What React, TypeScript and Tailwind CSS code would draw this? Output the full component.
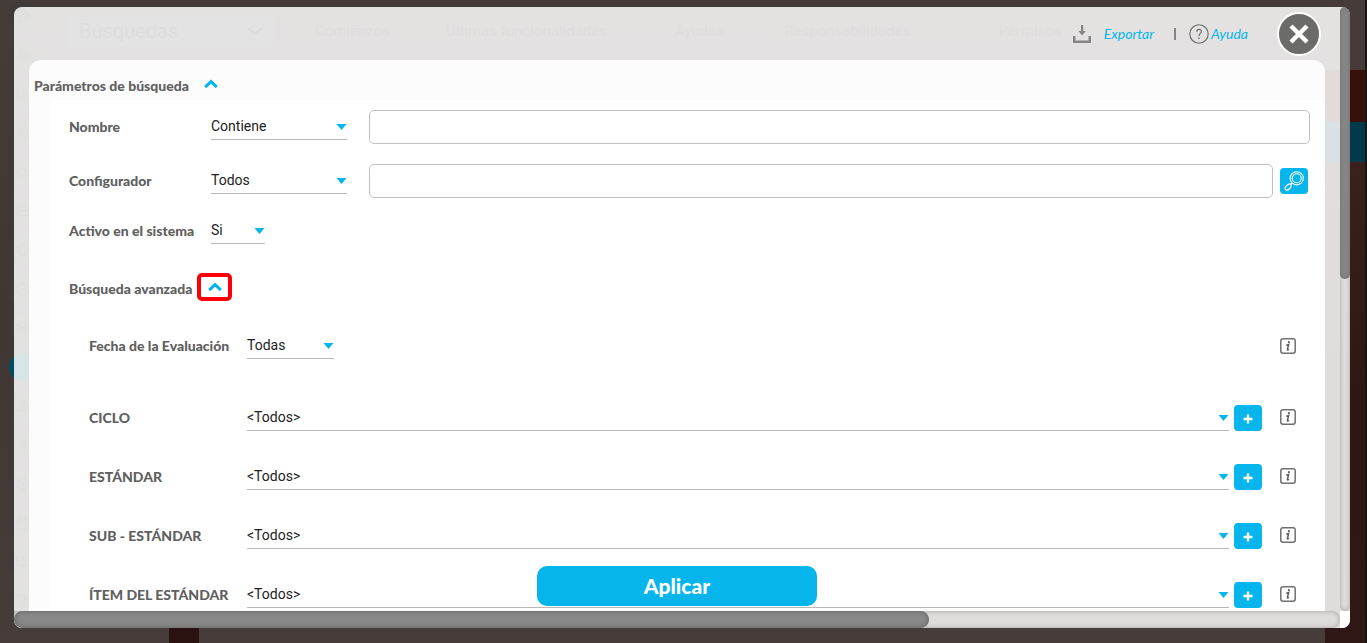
import * as React from 'react';
import {
  BarChart3,
  BookOpen,
  Box,
  Calendar,
  CircleCheck,
  ClipboardList,
  Cloud,
  FileText,
  Home,
  Layers,
  Mail,
  Settings,
  Shield,
  TriangleAlert,
  User,
  Users,
} from 'lucide-react';

const menuIcons = [Home, Settings, BarChart3, Users, Cloud, Mail, Shield, CircleCheck, Layers, ClipboardList, TriangleAlert, User, Box, Calendar, BookOpen, FileText];

const criteria = ['CICLO', 'ESTÁNDAR', 'SUB - ESTÁNDAR', 'ÍTEM DEL ESTÁNDAR'];

const labelClass = "shrink-0 pb-px font-['Lato',sans-serif] text-sm leading-5 font-black text-[#606060]";
const inputClass = 'h-[34px] min-w-0 flex-1 rounded-[5px] border border-[#c0c0c4] bg-white px-2 text-sm outline-none';

interface SelectProps {
  id: string;
  options: string[];
  className: string;
}

const Select = ({ id, options, className }: SelectProps) => (
  <div className={`relative ${className}`}>
    <select
      id={id}
      className="block h-[26px] w-full appearance-none border-b border-[#b8b8b8] bg-transparent pr-5 pb-[2px] text-sm leading-5 text-[#222222] outline-none"
    >
      {options.map((option) => (
        <option key={option}>{option}</option>
      ))}
    </select>
    <svg className="pointer-events-none absolute top-[10px] right-0 h-[6px] w-[11px]" viewBox="0 0 11 6">
      <path d="M0.5 0h10L5.5 6z" fill="#06b5ec" />
    </svg>
  </div>
);

const Chevron = () => (
  <svg className="h-[10px] w-[14px]" viewBox="0 0 14 10" fill="none">
    <path d="M1.2 8.2L7 2.6l5.8 5.6" stroke="#06b5ec" strokeWidth="3" />
  </svg>
);

const InfoButton = () => (
  <button type="button" aria-label="Información" className="h-4 w-4 shrink-0">
    <svg className="h-4 w-4" viewBox="0 0 16 16" fill="none">
      <rect x="0.8" y="0.8" width="14.4" height="14.4" rx="2.2" stroke="#707070" strokeWidth="1.5" />
      <circle cx="8.9" cy="4.2" r="1.1" fill="#606060" />
      <path d="M6.3 7.3l2.3-.7-1.2 4.9c-.1.7.5.6 1.5-.3" stroke="#606060" strokeWidth="1.5" />
    </svg>
  </button>
);

const Backdrop = () => (
  <div aria-hidden="true" className="absolute inset-0 -z-10 flex bg-linear-to-b from-[#453b39] via-[#403634] to-[#463d3b]">
    <div className="flex shrink-0 flex-col gap-[11px] pt-[2px] pl-[9px]">
      {menuIcons.map((Icon, index) => (
        <span
          key={index}
          className={`flex h-7 w-7 shrink-0 items-center justify-center rounded-full ${index === 9 ? 'bg-[#004c62] text-[#004c62]' : 'bg-[#3d3c3a] text-[#2a2624]'}`}
        >
          <Icon size={14} />
        </span>
      ))}
    </div>
    <div className="flex min-w-0 flex-1 flex-col justify-between">
      <div className="flex h-[62px] items-center pl-[30px] font-['Roboto',sans-serif] text-[15px] text-[#221c1a]">
        <div className="mr-10 flex h-8 w-[208px] items-center justify-between rounded bg-[#4a4341] px-3 text-xl text-[#221c1a]">
          Búsquedas
          <svg className="h-2 w-4" viewBox="0 0 16 8" fill="none">
            <path d="M1 1l7 6 7-6" stroke="#100c0b" strokeWidth="2" />
          </svg>
        </div>
        <span className="mr-14">Comienzos</span>
        <span className="mr-[68px]">Últimas funcionalidades</span>
        <span className="mr-[60px]">Ayudas</span>
        <span className="mr-[88px]">Responsabilidades</span>
        <span>Permisos</span>
      </div>
      <div className="ml-[132px] h-5 w-[30px] bg-[#2a1211]" />
    </div>
    <div className="flex w-[42px] shrink-0 flex-col border-r-2 border-[#171515]">
      <div className="h-[70px] bg-[#463b39]" />
      <div className="h-[52px] bg-[#371009]" />
      <div className="h-10 bg-[#003a4c]" />
      <div className="flex-1 bg-linear-to-b from-[#3a211b] via-[#2d1613] to-[#2e1714]" />
    </div>
  </div>
);

const App = () => {
  return (
    <div className="relative isolate h-screen overflow-hidden pt-[7px] pr-[17px] pb-[15px] pl-[14px] font-['Roboto',sans-serif]">
      <Backdrop />
      <div role="dialog" aria-label="Parámetros de búsqueda" className="flex h-full overflow-hidden rounded-lg bg-white/85">
        <div className="relative flex min-w-0 flex-1 flex-col">
          <header className="flex h-[54px] shrink-0 items-center justify-end pr-[19px] font-['Lato',sans-serif] text-sm text-[#06b5ec] italic">
            <a href="#exportar" className="flex items-center gap-[13px]">
              <svg className="h-[18px] w-[18px]" viewBox="0 0 18 18">
                <path d="M0 11h2.5v4.5h13V11H18v7H0z" fill="#858585" />
                <path d="M8 0h2.2v6h2.6L9.1 10.6 5.4 6H8z" fill="#858585" />
              </svg>
              Exportar
            </a>
            <span className="mr-[13px] ml-5 h-3 w-[2px] bg-[#858585]" />
            <a href="#ayuda" className="mr-[29px] flex items-center gap-[2px]">
              <svg className="h-5 w-5" viewBox="0 0 20 20" fill="none" stroke="#6b6b6b">
                <circle cx="10" cy="10" r="9.2" strokeWidth="1.1" />
                <path d="M7.7 7.8c0-3.3 4.7-3.1 4.7-.3 0 1.9-2.4 2-2.4 4.4" strokeWidth="1.2" />
                <path d="M10 13.4v1.5" strokeWidth="1.4" />
              </svg>
              Ayuda
            </a>
            <button type="button" aria-label="Cerrar" className="flex h-11 w-11 items-center justify-center rounded-full border-2 border-white bg-[#6b6b69]">
              <svg className="h-5 w-5" viewBox="0 0 20 20" fill="none">
                <path d="M2 2l16 16M18 2L2 18" stroke="#ffffff" strokeWidth="4.4" />
              </svg>
            </button>
          </header>

          <main className="-mt-px mr-[15px] ml-[15px] min-h-0 flex-1 overflow-hidden rounded-t-xl bg-white/90">
            <h2 className="flex h-10 items-center gap-[15px] pt-3 pl-[5px]">
              <span className={labelClass}>Parámetros de búsqueda</span>
              <button type="button" aria-label="Contraer parámetros" className="pb-1">
                <Chevron />
              </button>
            </h2>
            <form className="ml-5 rounded-tl-lg bg-white/90 pt-[10px] pr-[15px] pl-5">
              <div className="flex flex-col gap-5">
                <div className="flex items-center">
                  <label htmlFor="nombre-modo" className={`${labelClass} w-[142px]`}>Nombre</label>
                  <Select id="nombre-modo" options={['Contiene', 'Igual a']} className="mr-[22px] w-[136px]" />
                  <input type="text" aria-label="Nombre" className={inputClass} />
                </div>
                <div className="flex items-center">
                  <label htmlFor="configurador-modo" className={`${labelClass} w-[142px]`}>Configurador</label>
                  <Select id="configurador-modo" options={['Todos']} className="mr-[22px] w-[136px]" />
                  <input type="text" aria-label="Configurador" className={inputClass} />
                  <button type="button" aria-label="Buscar" className="mr-[2px] ml-[7px] flex h-[26px] w-7 items-center justify-center rounded bg-[#06b5ec]">
                    <svg className="h-5 w-5" viewBox="0 0 20 20" fill="none" stroke="#ffffff">
                      <circle cx="12.7" cy="7.3" r="6.6" strokeWidth="1.1" />
                      <circle cx="12.7" cy="7.3" r="4.5" strokeWidth="1.1" />
                      <path d="M8 12L6.7 13.3" strokeWidth="1.3" />
                      <ellipse cx="4.2" cy="16" rx="3.8" ry="2.1" transform="rotate(-45 4.2 16)" strokeWidth="1.2" />
                    </svg>
                  </button>
                </div>
                <div className="flex items-center">
                  <label htmlFor="activo" className={`${labelClass} w-[142px]`}>Activo en el sistema</label>
                  <Select id="activo" options={['Si', 'No']} className="w-[54px]" />
                </div>
              </div>

              <h3 className="mt-[29px] flex items-center gap-[5px]">
                <span className={`${labelClass} pt-1`}>Búsqueda avanzada</span>
                <button type="button" aria-label="Contraer búsqueda avanzada" className="flex h-7 w-[35px] items-center justify-center rounded-[5px] border-4 border-[#fb0007]">
                  <Chevron />
                </button>
              </h3>

              <div className="mt-8 flex flex-col gap-[33px] pl-5">
                <div className="mb-[13px] flex items-center">
                  <label htmlFor="fecha" className={`${labelClass} w-[158px]`}>Fecha de la Evaluación</label>
                  <Select id="fecha" options={['Todas']} className="w-[87px]" />
                  <div className="mr-[14px] ml-auto flex">
                    <InfoButton />
                  </div>
                </div>
                {criteria.map((name) => (
                  <div key={name} className="flex items-center">
                    <label htmlFor={name} className={`${labelClass} w-[158px]`}>{name}</label>
                    <Select id={name} options={['<Todos>']} className="min-w-0 flex-1" />
                    <button type="button" aria-label={`Agregar ${name}`} className="mr-[18px] ml-[5px] flex h-[26px] w-7 shrink-0 items-center justify-center rounded bg-[#06b5ec] pt-[2px]">
                      <svg className="h-[10px] w-[10px]" viewBox="0 0 10 10">
                        <path d="M0.5 5h9M5 0.5v9" stroke="#ffffff" strokeWidth="2.4" />
                      </svg>
                    </button>
                    <div className="mr-[14px] flex pb-[2px]">
                      <InfoButton />
                    </div>
                  </div>
                ))}
              </div>
            </form>
          </main>

          <div className="pointer-events-none absolute inset-x-0 bottom-[22px] flex justify-center">
            <button type="button" className="pointer-events-auto h-10 w-[280px] rounded-[10px] bg-[#06b5ec] font-['Lato',sans-serif] text-[21px] font-black text-white">
              Aplicar
            </button>
          </div>

          <div className="h-[17px] shrink-0 rounded-r-lg bg-[#dedddc] shadow-[inset_0_0_5px_#a0a0a0]">
            <div className="h-full w-[69%] rounded-full bg-[#888888] shadow-[inset_0_0_5px_#606060]" />
          </div>
        </div>

        <div className="flex w-[10px] shrink-0 flex-col">
          <div className="min-h-0 flex-1 rounded-full shadow-[inset_0_0_4px_#a0a0a0]">
            <div className="h-[45%] rounded-full bg-[#858685] shadow-[inset_0_0_4px_#707070]" />
          </div>
          <div className="h-[17px] bg-white" />
        </div>
      </div>
    </div>
  );
};

export default App;
